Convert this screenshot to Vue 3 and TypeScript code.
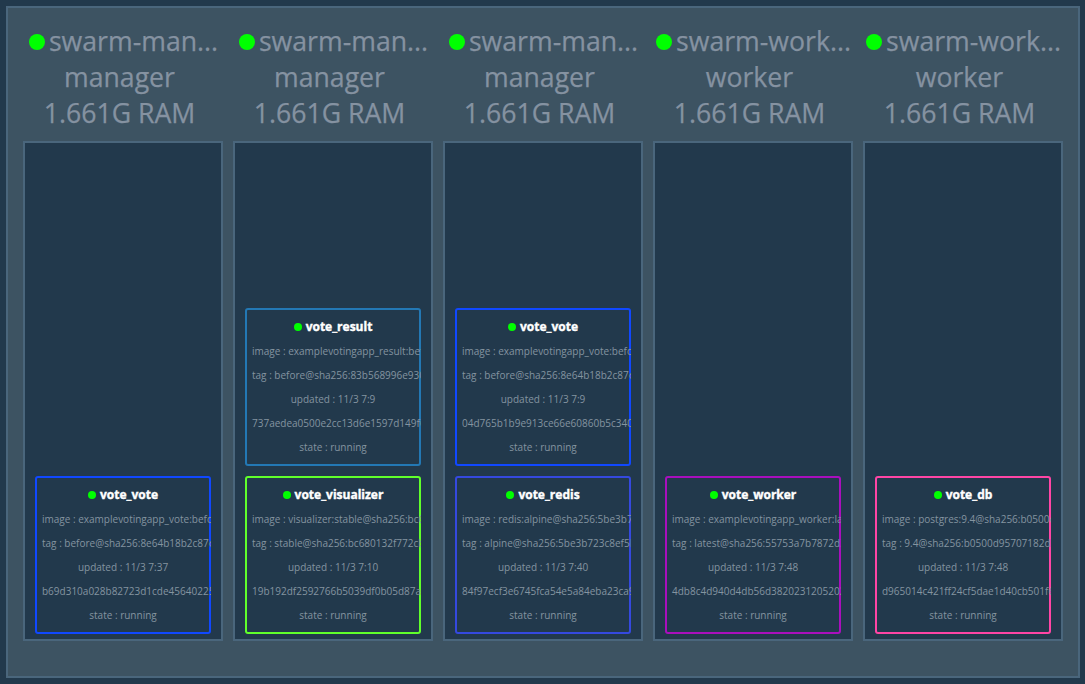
<script setup lang="ts">
interface Task {
  name: string
  color: string
  image: string
  tag: string
  updated: string
  id: string
}

interface SwarmNode {
  name: string
  role: string
  tasks: Task[]
}

const nodes: SwarmNode[] = [
  {
    name: 'swarm-man...',
    role: 'manager',
    tasks: [
      { name: 'vote_vote', color: '#1048ff', image: 'examplevotingapp_vote:before', tag: 'before@sha256:8e64b18b2c87d', updated: '11/3 7:37', id: 'b69d310a028b82723d1cde456402251' },
    ],
  },
  {
    name: 'swarm-man...',
    role: 'manager',
    tasks: [
      { name: 'vote_result', color: '#2378b4', image: 'examplevotingapp_result:before', tag: 'before@sha256:83b568996e930', updated: '11/3 7:9', id: '737aedea0500e2cc13d6e1597d149f6' },
      { name: 'vote_visualizer', color: '#60ff2b', image: 'visualizer:stable@sha256:bc680', tag: 'stable@sha256:bc680132f772cb', updated: '11/3 7:10', id: '19b192df2592766b5039df0b05d87a4' },
    ],
  },
  {
    name: 'swarm-man...',
    role: 'manager',
    tasks: [
      { name: 'vote_vote', color: '#1048ff', image: 'examplevotingapp_vote:before', tag: 'before@sha256:8e64b18b2c87d', updated: '11/3 7:9', id: '04d765b1b9e913ce66e60860b5c3401' },
      { name: 'vote_redis', color: '#3549df', image: 'redis:alpine@sha256:5be3b723', tag: 'alpine@sha256:5be3b723c8ef5b', updated: '11/3 7:40', id: '84f97ecf3e6745fca54e5a84eba23ca9' },
    ],
  },
  {
    name: 'swarm-work...',
    role: 'worker',
    tasks: [
      { name: 'vote_worker', color: '#a90fbd', image: 'examplevotingapp_worker:latest', tag: 'latest@sha256:55753a7b7872d3', updated: '11/3 7:48', id: '4db8c4d940d4db56d3820231205202' },
    ],
  },
  {
    name: 'swarm-work...',
    role: 'worker',
    tasks: [
      { name: 'vote_db', color: '#ff45a5', image: 'postgres:9.4@sha256:b0500d', tag: '9.4@sha256:b0500d95707182d', updated: '11/3 7:48', id: 'd965014c421ff24cf5dae1d40cb501f6' },
    ],
  },
]
</script>

<template>
  <main class="page">
    <div class="cluster">
      <section v-for="(node, i) in nodes" :key="i" class="node">
        <header class="node-head">
          <div class="node-name"><span class="dot dot-large"></span><span>{{ node.name }}</span></div>
          <div class="node-info">{{ node.role }}</div>
          <div class="node-info">1.661G RAM</div>
        </header>
        <ul class="tasks">
          <li v-for="task in node.tasks" :key="task.id" class="task" :style="{ color: task.color }">
            <div class="task-name"><span class="dot"></span><span>{{ task.name }}</span></div>
            <div class="line">image : {{ task.image }}</div>
            <div class="line">tag : {{ task.tag }}</div>
            <div class="line centered">updated : {{ task.updated }}</div>
            <div class="line">{{ task.id }}</div>
            <div class="line centered">state : running</div>
          </li>
        </ul>
      </section>
    </div>
  </main>
</template>

<style>
body {
  background: #22394c;
}
</style>

<style scoped>
.page {
  box-sizing: border-box;
  height: 684px;
  padding: 6px 5px 6px 6px;
  overflow: hidden;
  background: #22394c;
  font-family: 'Open Sans', sans-serif;
}
.cluster {
  box-sizing: border-box;
  display: flex;
  gap: 10px;
  height: 672px;
  padding: 15px;
  border: 2px solid #4a667c;
  background: #3d5362;
}
.node {
  flex: none;
  width: 200px;
}
.node-head {
  height: 118px;
  color: #8592a1;
  font-size: 26.67px;
  line-height: 36px;
  text-align: center;
  white-space: nowrap;
  -webkit-text-stroke: 0.25px #8592a1;
}
.node-name {
  display: flex;
  align-items: center;
  justify-content: center;
  gap: 4px;
  padding-left: 1px;
}
.node-info {
  padding-right: 7px;
}
.dot {
  flex: none;
  width: 8px;
  height: 8px;
  border-radius: 50%;
  background: #00ff00;
}
.dot-large {
  width: 16px;
  height: 16px;
  margin-top: 2px;
}
.tasks {
  box-sizing: border-box;
  display: flex;
  flex-direction: column;
  justify-content: flex-end;
  gap: 10px;
  height: 500px;
  margin: 0;
  padding: 5px 10px;
  border: 2px solid #4a667c;
  background: #22394c;
  list-style: none;
}
.task {
  box-sizing: border-box;
  flex: none;
  height: 158px;
  padding: 7px;
  overflow: hidden;
  border-radius: 3px;
  box-shadow: inset 0 0 0 2px currentColor;
}
.task-name {
  display: flex;
  align-items: center;
  justify-content: center;
  gap: 4px;
  height: 24px;
  color: #fff;
  font-size: 12px;
  font-weight: 700;
  line-height: 24px;
  -webkit-text-stroke: 0.4px #fff;
}
.task-name span:last-child {
  height: 24px;
}
.line {
  height: 24px;
  color: #8494a0;
  font-size: 10px;
  line-height: 24px;
  white-space: nowrap;
}
.centered {
  text-align: center;
}
</style>
